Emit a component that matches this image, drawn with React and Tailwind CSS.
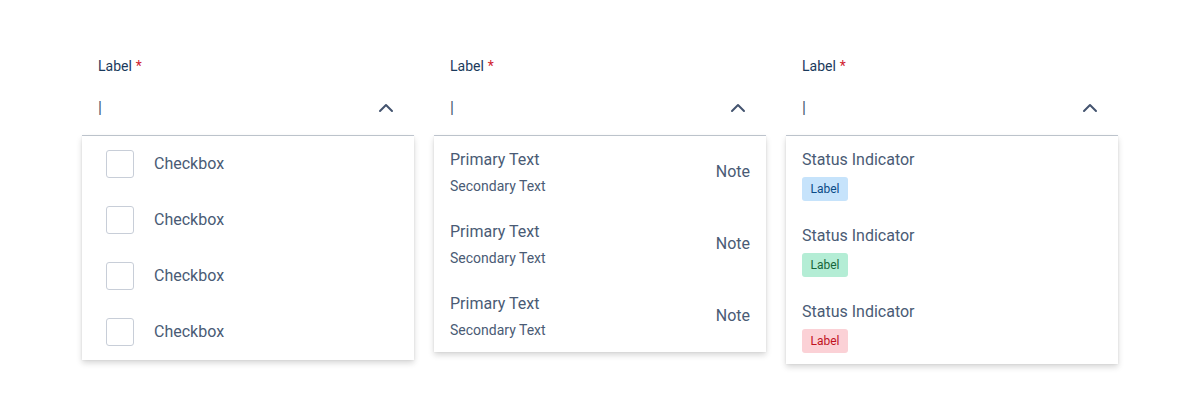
import { ChevronUp } from 'lucide-react'

const badgeStyles = {
  blue: 'bg-[#c6e3fb] text-[#0b4a86]',
  green: 'bg-[#b4edd5] text-[#17663a]',
  red: 'bg-[#fbd1d6] text-[#c1121f]',
}

function Field({ children }) {
  return (
    <div className="w-[332px]">
      <div className="h-5 flex items-center px-4 text-[14px] text-[#1b3a5c]">
        Label <span className="ml-1 text-[#d0212f]">*</span>
      </div>
      <div className="mt-[5px] h-[55px] flex items-center justify-between px-4 border-b border-[#c5ccd6]">
        <span className="text-[16px] text-[#44546f]">|</span>
        <ChevronUp size={24} strokeWidth={2} className="text-[#44546f]" />
      </div>
      <div className="bg-white shadow-[0_3px_6px_rgba(0,0,0,0.16),0_0_2px_rgba(0,0,0,0.08)]">
        {children}
      </div>
    </div>
  )
}

export default function App() {
  return (
    <div
      className="w-[1200px] h-[404px] bg-white flex gap-5 pl-[82px] pt-[56px] items-start"
      style={{ fontFamily: 'Roboto, "Noto Sans", sans-serif' }}
    >
      <Field>
        {[0, 1, 2, 3].map((i) => (
          <div key={i} className="h-14 flex items-center pl-6">
            <div className="w-7 h-7 rounded-[3px] border border-[#c8ced8] bg-white" />
            <span className="ml-5 text-[16px] text-[#4a5b75]">Checkbox</span>
          </div>
        ))}
      </Field>
      <Field>
        {[0, 1, 2].map((i) => (
          <div key={i} className="h-[72px] flex items-center justify-between px-4">
            <div className="flex flex-col pt-[2px]">
              <span className="text-[16px] leading-5 text-[#4a5b75]">Primary Text</span>
              <span className="mt-[6px] text-[14px] leading-5 text-[#4a5b75]">Secondary Text</span>
            </div>
            <span className="text-[16px] text-[#4a5b75]">Note</span>
          </div>
        ))}
      </Field>
      <Field>
        {['blue', 'green', 'red'].map((c) => (
          <div key={c} className="h-[76px] flex flex-col justify-center px-4 pt-[2px]">
            <span className="text-[16px] leading-5 text-[#4a5b75]">Status Indicator</span>
            <span
              className={`mt-[7px] w-[46px] h-6 rounded-[3px] flex items-center justify-center text-[12px] ${badgeStyles[c]}`}
            >
              Label
            </span>
          </div>
        ))}
      </Field>
    </div>
  )
}
